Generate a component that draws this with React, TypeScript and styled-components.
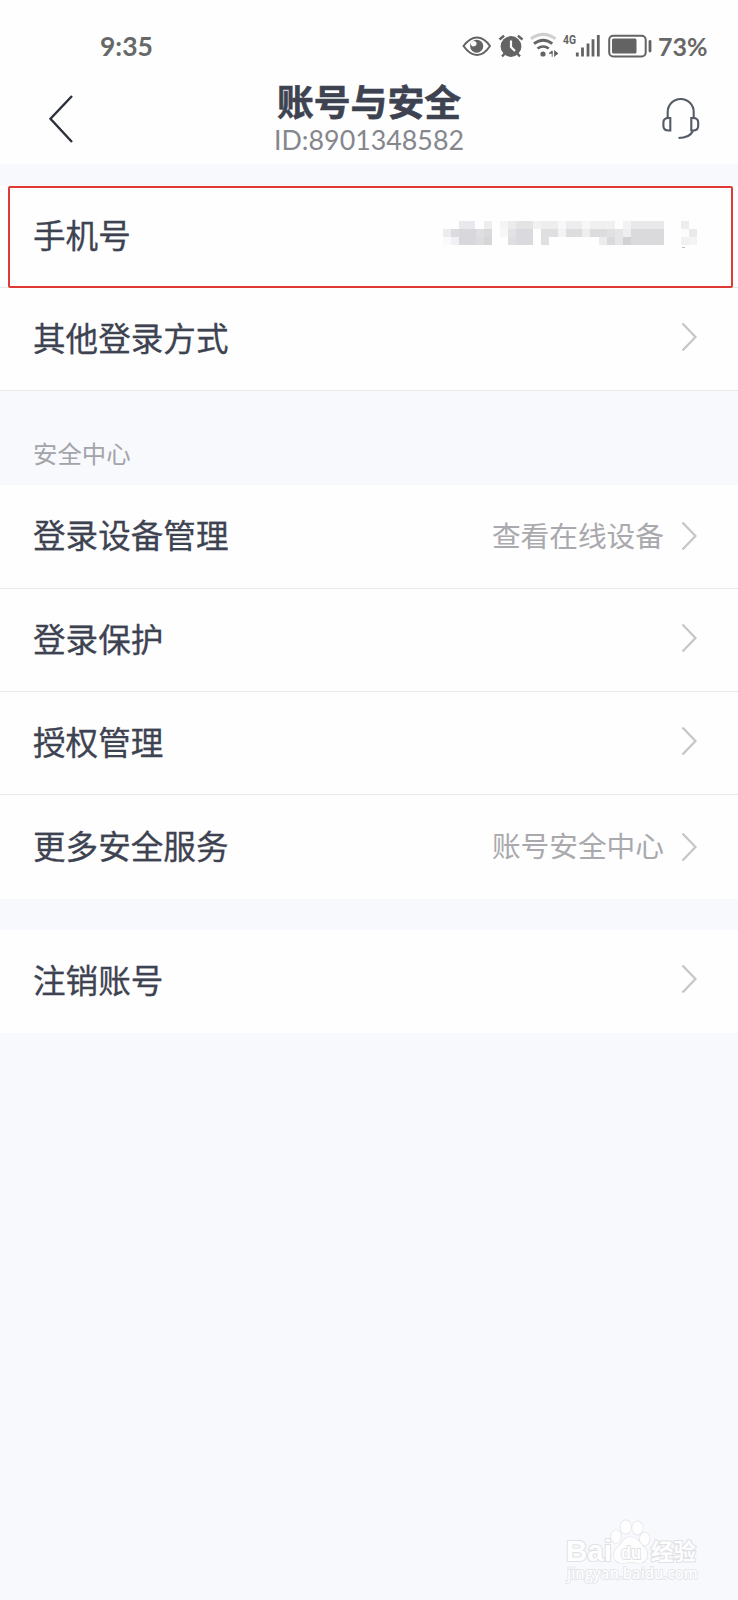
import React from 'react';
import styled, { createGlobalStyle } from 'styled-components';

const GlobalStyle = createGlobalStyle`
  * { box-sizing: border-box; }
  body {
    margin: 0;
    background: #f7f9fd;
    font-family: 'Noto Sans CJK SC', sans-serif;
    color: #3e4352;
  }
`;

const Page = styled.main`
  position: relative;
  width: 738px;
  height: 1600px;
  overflow: hidden;
  background: #f7f9fd;
`;

const Top = styled.header`
  height: 164px;
  background: #fefefe;
`;

const StatusBar = styled.div`
  height: 80px;
  padding: 11px 30px 0 100px;
  display: flex;
  align-items: center;
  justify-content: space-between;
  color: #686868;
  font-family: Lato, sans-serif;
  font-size: 26.5px;
  font-weight: 700;
`;

const StatusIcons = styled.div`
  display: flex;
  align-items: center;
`;

const Percent = styled.span`
  width: 50px;
  margin-left: 2px;
  font-size: 25px;
  white-space: nowrap;
`;

const NavBar = styled.div`
  height: 84px;
  padding: 0 36px 0 48px;
  display: grid;
  grid-template-columns: 100px 1fr 100px;
`;

const BackIcon = styled.svg`
  margin-top: 14px;
`;

const SupportIcon = styled.svg`
  margin-top: 16px;
  justify-self: end;
`;

const Heading = styled.div`
  display: flex;
  flex-direction: column;
  align-items: center;
  margin-right: 12px;
`;

const Title = styled.h1`
  margin: 0;
  font-size: 36.8px;
  line-height: 40px;
  font-weight: 700;
  -webkit-text-stroke: 0.6px #3e4352;
  white-space: nowrap;
`;

const AccountId = styled.div`
  margin-top: 5px;
  font-family: Lato, sans-serif;
  font-size: 26.8px;
  line-height: 30px;
  color: #85878d;
  white-space: nowrap;
`;

const Group = styled.section<{ $top: number }>`
  margin-top: ${(p) => p.$top}px;
`;

const SectionTitle = styled.h2`
  margin: 0;
  height: 94px;
  padding: 44px 33px 0;
  font-size: 24.4px;
  line-height: 36px;
  font-weight: 400;
  color: #a3a4a9;
`;

const Row = styled.div<{ $height?: number; $line?: boolean }>`
  height: ${(p) => p.$height ?? 103}px;
  padding: 0 41px 5px 33px;
  display: flex;
  align-items: center;
  background: #fefefe;
  border-bottom: ${(p) => (p.$line ? '1px solid #e7e8ea' : '0')};
`;

const Label = styled.span`
  flex: 1;
  font-size: 32.6px;
  line-height: 44px;
  font-weight: 400;
  -webkit-text-stroke: 0.3px #3e4352;
`;

const Value = styled.span`
  margin: 1px 17px 0 0;
  font-size: 28.7px;
  line-height: 40px;
  color: #a9a9ae;
`;

const Highlight = styled.div`
  position: absolute;
  left: 8px;
  top: 186px;
  width: 725px;
  height: 102px;
  border: 2px solid #df3a34;
  border-radius: 2px;
`;

const Watermark = styled.div`
  position: absolute;
  left: 560px;
  top: 1515px;
`;

const ChevronIcon = styled.svg<{ $drop?: boolean }>`
  margin-top: ${(p) => (p.$drop ? 4 : 0)}px;
`;

const Chevron = ({ drop }: { drop?: boolean }) => (
  <ChevronIcon $drop={drop} width="16" height="30" viewBox="0 0 16 30" fill="none">
    <path d="M1.5 1.5 14.5 15 1.5 28.5" stroke="#c6c6c8" strokeWidth="2.3" />
  </ChevronIcon>
);

const tiles: [number, number, number, number, string][] = [
  [16, 0, 16, 8, '#e9e8ec'], [41, 0, 8, 8, '#eeeeef'],
  [0, 8, 8, 8, '#ececee'], [8, 8, 8, 8, '#dcdce0'], [16, 8, 17, 8, '#d8d8dc'], [33, 8, 8, 8, '#dfdfe3'], [41, 8, 8, 8, '#dadadc'],
  [0, 16, 8, 8, '#fafafb'], [8, 16, 8, 8, '#f1f1f5'], [16, 16, 17, 8, '#d8d8dc'], [33, 16, 8, 8, '#dddde0'], [41, 16, 8, 8, '#d6d6d7'],
  [57, 0, 8, 8, '#f5f5f5'], [65, 0, 8, 8, '#ececee'], [73, 0, 17, 8, '#e4e4e5'], [90, 0, 8, 8, '#f2f2f2'], [98, 0, 17, 8, '#eeeeef'],
  [115, 0, 8, 8, '#f8f8f8'], [123, 0, 16, 8, '#ededef'], [139, 0, 8, 8, '#f7f7f7'], [147, 0, 25, 8, '#f0f0f1'], [180, 0, 8, 8, '#f2f2f2'], [188, 0, 33, 8, '#e8e8ea'],
  [57, 8, 8, 8, '#f8f8f8'], [65, 8, 8, 8, '#e3e3e6'], [73, 8, 17, 8, '#dadade'], [98, 8, 17, 8, '#dfdfe2'], [115, 8, 8, 8, '#f3f3f3'], [123, 8, 16, 8, '#dddde0'], [139, 8, 8, 8, '#eeeeef'], [147, 8, 17, 8, '#dcdcdf'], [164, 8, 8, 8, '#e1e1e4'], [172, 8, 8, 8, '#e5e5e8'], [180, 8, 8, 8, '#eeeeef'], [188, 8, 33, 8, '#dadadd'],
  [65, 16, 8, 8, '#dfdfe2'], [73, 16, 17, 8, '#dadade'], [98, 16, 8, 8, '#e0e0e1'], [156, 16, 8, 8, '#ececef'], [164, 16, 8, 8, '#dadadc'], [172, 16, 8, 8, '#e6e6e9'], [180, 16, 8, 8, '#d1d1d4'], [188, 16, 33, 8, '#dadadd'],
  [238, 0, 8, 8, '#ededed'], [238, 8, 8, 8, '#fcfcfc'], [246, 8, 8, 8, '#eaeaeb'], [238, 16, 8, 8, '#f1f1f2'], [246, 16, 8, 8, '#f4f4f4'],
];

const MaskIcon = styled.svg`
  margin: 4px 0 0;
`;

const MaskedPhone = () => (
  <MaskIcon width="254" height="30" viewBox="0 0 254 30" shapeRendering="crispEdges">
    {tiles.map(([x, y, w, h, c]) => (
      <rect key={`${x}-${y}`} x={x} y={y} width={w} height={h} fill={c} />
    ))}
    <path d="M239 27v-1h3" stroke="#bdbdbd" fill="none" />
  </MaskIcon>
);

const StatusGlyphs = () => (
  <svg width="196" height="30" viewBox="460 30.5 196 30" fill="none">
    <path d="M463.5 45.5Q470 37 477 37T490 45.5Q484 54.5 477 54.5T463.5 45.5Z" stroke="#636363" strokeWidth="2" />
    <circle cx="476.7" cy="45.7" r="6.5" fill="#636363" />
    <path d="M476.6 42.5a3 3 0 0 0-5-1.2c-1.6 1.8-.4 4.6 1.8 4.6 2 0 3.6-1.6 3.2-3.4Z" fill="#fefefe" />
    <circle cx="511" cy="46" r="10.4" fill="#636363" />
    <path d="m499.5 39 4.6-3.8M522.5 39l-4.6-3.8M504.5 53.3l-2.5 2.5M517.5 53.3l2.5 2.5" stroke="#636363" strokeWidth="2.4" />
    <path d="M511 40v6.5l4 4" stroke="#fefefe" strokeWidth="2.2" />
    <path d="M531 38.2Q543.5 29.5 555.5 38.2" stroke="#cfcfcf" strokeWidth="3" />
    <path d="M534 43.2q9.3-7 18.3 0" stroke="#636363" strokeWidth="2.8" />
    <path d="M537.5 48q5.7-4 11.3 0" stroke="#636363" strokeWidth="2.6" />
    <circle cx="543" cy="53.5" r="2.6" fill="#636363" />
    <path d="m552.2 50.4-3 2.4h3ZM552.2 52v4.2M554.6 49.8v6.4M555 50.8l3 2.2-3 2Z" stroke="#636363" strokeWidth="0.9" fill="#636363" />
    <text x="563" y="43.5" fill="#636363" fontFamily="Roboto, sans-serif" fontWeight="700" fontSize="13.5" textLength="13" lengthAdjust="spacingAndGlyphs">4G</text>
    <path d="M577.3 52v4M582.5 47v9M588 43v13M593 38.8V56M598.3 34.5V56" stroke="#636363" strokeWidth="2.8" />
    <rect x="609.2" y="35.2" width="36.5" height="20.8" rx="4" stroke="#636363" strokeWidth="2" />
    <rect x="612" y="38" width="24.5" height="15" rx="1.5" fill="#636363" />
    <path d="M650 41v9.5" stroke="#636363" strokeWidth="2.8" strokeLinecap="round" />
  </svg>
);

export default function App() {
  return (
    <Page>
      <GlobalStyle />
      <Top>
        <StatusBar>
          <span>9:35</span>
          <StatusIcons>
            <StatusGlyphs />
            <Percent>73%</Percent>
          </StatusIcons>
        </StatusBar>
        <NavBar>
          <BackIcon width="26" height="50" viewBox="0 0 26 50" fill="none">
            <path d="M24 2 2.5 24.8 24 48" stroke="#2c303b" strokeWidth="2.4" />
          </BackIcon>
          <Heading>
            <Title>账号与安全</Title>
            <AccountId>ID:8901348582</AccountId>
          </Heading>
          <SupportIcon width="40" height="46" viewBox="662 96 40 46" fill="none" stroke="#555b65" strokeWidth="2.1">
            <path d="M667.7 118V112a13 13 0 0 1 26 0v6" />
            <path d="M670.3 118h-1.6q-5.3 0-5.3 4.5v3.5q0 4.5 5.3 4.5h1.6ZM691.3 118h1.6q5.3 0 5.3 4.5v3.5q0 4.5-5.3 4.5h-1.6Z" />
            <path d="M693 131q-3.5 7-14.5 7" />
          </SupportIcon>
        </NavBar>
      </Top>

      <Group $top={22}>
        <Row $line $height={102}>
          <Label>手机号</Label>
          <MaskedPhone />
        </Row>
        <Row $line>
          <Label>其他登录方式</Label>
          <Chevron />
        </Row>
      </Group>

      <SectionTitle>安全中心</SectionTitle>
      <Group $top={0}>
        <Row $line $height={104}>
          <Label>登录设备管理</Label>
          <Value>查看在线设备</Value>
          <Chevron drop />
        </Row>
        <Row $line>
          <Label>登录保护</Label>
          <Chevron />
        </Row>
        <Row $line $height={103}>
          <Label>授权管理</Label>
          <Chevron />
        </Row>
        <Row $height={104}>
          <Label>更多安全服务</Label>
          <Value>账号安全中心</Value>
          <Chevron drop />
        </Row>
      </Group>

      <Group $top={31}>
        <Row>
          <Label>注销账号</Label>
          <Chevron />
        </Row>
      </Group>

      <Highlight />

      <Watermark>
        <svg width="150" height="75" viewBox="560 1515 150 75" fill="#fefefe" stroke="#e0e1e5" strokeWidth="1.2" paintOrder="stroke">
          <text x="566" y="1561" fontFamily="Liberation Sans, sans-serif" fontWeight="700" fontSize="29" textLength="46" lengthAdjust="spacingAndGlyphs" strokeWidth="2">Bai</text>
          <ellipse cx="616" cy="1536.5" rx="5" ry="6.5" />
          <ellipse cx="625.7" cy="1527" rx="5.3" ry="6.8" />
          <ellipse cx="637.5" cy="1528" rx="5.3" ry="6.8" />
          <ellipse cx="644.7" cy="1539" rx="5" ry="6.5" />
          <path d="M630 1537c-6 0-7 5-12 10-7 6-5 16 5 16 4 0 4-1 8-1s4 1 8 1c9 0 11-10 5-16-5-5-7-10-14-10Z" />
          <text x="621" y="1558.5" fontFamily="Liberation Sans, sans-serif" fontWeight="700" fontSize="19" textLength="20" lengthAdjust="spacingAndGlyphs" strokeWidth="2">du</text>
          <text x="651" y="1559.5" fontFamily="Noto Sans CJK SC, sans-serif" fontWeight="700" fontSize="22.5" textLength="45" strokeWidth="2">经验</text>
          <text x="567" y="1579" fontFamily="Open Sans, sans-serif" fontWeight="600" fontSize="16" textLength="131" lengthAdjust="spacingAndGlyphs" strokeWidth="1.5">jingyan.baidu.com</text>
        </svg>
      </Watermark>
    </Page>
  );
}
